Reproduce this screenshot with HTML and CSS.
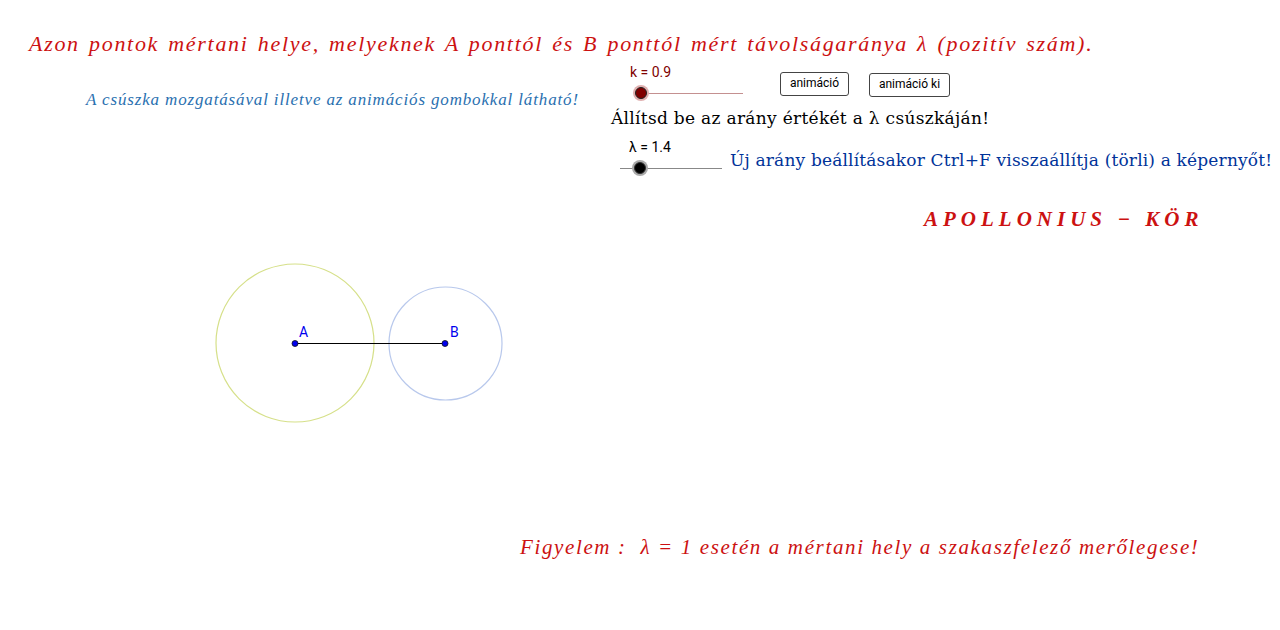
FILE: index.html
```html
<!DOCTYPE html>
<html lang="hu">
<head>
<meta charset="utf-8">
<title>Apollonius-kör</title>
<link rel="stylesheet" href="styles.css">
</head>
<body>
<div class="canvas">
  <svg class="geo" width="1280" height="630" viewBox="0 0 1280 630">
    <circle cx="295" cy="343" r="79" fill="none" stroke="#d6e08a" stroke-width="1.2"/>
    <circle cx="445.5" cy="343.5" r="56.5" fill="none" stroke="#b8c8ec" stroke-width="1.2"/>
    <line x1="295" y1="343.5" x2="445" y2="343.5" stroke="#000" stroke-width="1"/>
    <circle cx="295" cy="343.5" r="3" fill="#0000ee" stroke="#111" stroke-width="0.8"/>
    <circle cx="445" cy="343.5" r="3" fill="#0000ee" stroke="#111" stroke-width="0.8"/>
    <!-- k slider -->
    <line x1="641" y1="93.5" x2="743" y2="93.5" stroke="#c49090" stroke-width="1"/>
    <circle cx="641" cy="93" r="8" fill="#e0b0b0"/>
    <circle cx="641" cy="93" r="5.5" fill="#800000" stroke="#222" stroke-width="1"/>
    <!-- lambda slider -->
    <line x1="620" y1="168.5" x2="722" y2="168.5" stroke="#888" stroke-width="1"/>
    <circle cx="640" cy="168" r="8" fill="#aaa"/>
    <circle cx="640" cy="168" r="5.5" fill="#000" stroke="#333" stroke-width="1"/>
  </svg>

  <div class="txt title">Azon pontok mértani helye, melyeknek A ponttól és B ponttól mért távolságaránya λ (pozitív szám).</div>
  <div class="txt sub">A csúszka mozgatásával illetve az animációs gombokkal látható!</div>
  <div class="txt klabel">k = 0.9</div>
  <button class="btn btn1">animáció</button>
  <button class="btn btn2">animáció ki</button>
  <div class="txt slab set">Állítsd be az arány értékét a λ csúszkáján!</div>
  <div class="txt llabel">λ = 1.4</div>
  <div class="txt slab reset">Új arány beállításakor Ctrl+F visszaállítja (törli) a képernyőt!</div>
  <div class="txt apol">APOLLONIUS − KÖR</div>
  <div class="txt ptA">A</div>
  <div class="txt ptB">B</div>
  <div class="txt note">Figyelem :&nbsp; λ = 1 esetén a mértani hely a szakaszfelező merőlegese!</div>
</div>
</body>
</html>
```
FILE: styles.css
```css
html, body {
  margin: 0;
  padding: 0;
  background: #fff;
}
.canvas {
  position: relative;
  width: 1280px;
  height: 630px;
  overflow: hidden;
  font-family: Roboto, "Noto Sans", sans-serif;
}
.geo {
  position: absolute;
  left: 0;
  top: 0;
}
.txt {
  position: absolute;
  white-space: nowrap;
  line-height: 1;
}
.title {
  left: 29px;
  top: 33px;
  font-family: "Liberation Serif", serif;
  font-style: italic;
  font-size: 22px;
  letter-spacing: 1.7px;
  word-spacing: 2px;
  color: #cc1111;
}
.sub {
  left: 86px;
  top: 91px;
  font-family: "Liberation Serif", serif;
  font-style: italic;
  font-size: 17px;
  letter-spacing: 0.85px;
  color: #2a70b0;
}
.klabel {
  left: 630px;
  top: 65px;
  font-size: 14px;
  color: #800000;
}
.llabel {
  left: 629px;
  top: 140px;
  font-size: 14px;
  color: #000;
}
.btn {
  position: absolute;
  height: 24px;
  padding: 0 0 2px;
  background: #fff;
  border: 1px solid #444;
  border-radius: 3px;
  font-family: Roboto, sans-serif;
  font-size: 12px;
  color: #000;
  line-height: 20px;
  white-space: nowrap;
  text-align: center;
}
.btn1 { left: 780px; top: 72px; width: 69px; }
.btn2 { left: 869px; top: 73px; width: 81px; }
.slab {
  font-family: "DejaVu Serif", serif;
  font-size: 17px;
}
.set {
  left: 611px;
  top: 110px;
  letter-spacing: 0.3px;
  color: #000;
}
.reset {
  left: 730px;
  top: 152px;
  letter-spacing: 0.17px;
  color: #003399;
}
.apol {
  left: 924px;
  top: 209px;
  font-family: "Liberation Serif", serif;
  font-style: italic;
  font-weight: bold;
  font-size: 21px;
  letter-spacing: 5px;
  color: #cc1111;
}
.ptA, .ptB {
  font-size: 14px;
  color: #0000ee;
}
.ptA { left: 299px; top: 325px; }
.ptB { left: 450px; top: 325px; }
.note {
  left: 520px;
  top: 537px;
  font-family: "Liberation Serif", serif;
  font-style: italic;
  font-size: 21px;
  letter-spacing: 1.63px;
  color: #cc1111;
}
```
